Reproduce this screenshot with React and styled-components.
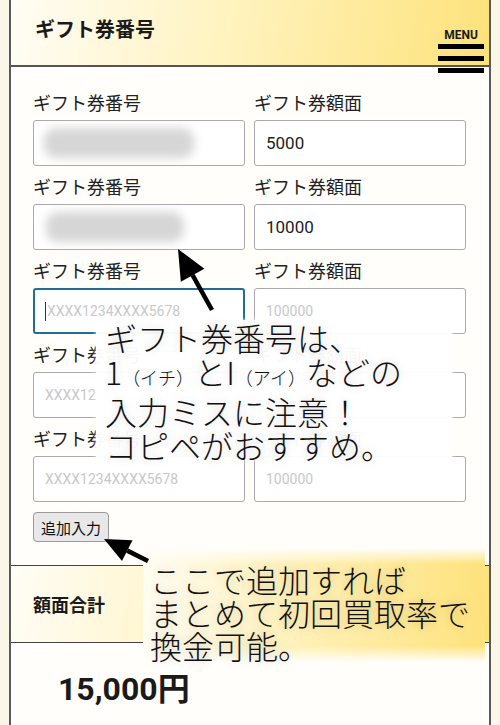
import React from "react";
import styled, { createGlobalStyle, css } from "styled-components";

const GlobalStyle = createGlobalStyle`
  body {
    margin: 0;
    background: #fbf7e8;
    font-family: Roboto, "Noto Sans CJK JP", sans-serif;
    color: #1a1a1a;
  }
`;

const Page = styled.div`
  position: relative;
  width: 500px;
  height: 725px;
  overflow: hidden;
`;

const Panel = styled.div`
  margin: 0 9px;
  height: 725px;
  background: #fffefa;
  border-left: 2px solid #5a5a5a;
  border-right: 2px solid #5a5a5a;
`;

const Header = styled.header`
  height: 67px;
  box-sizing: border-box;
  padding: 18px 5px 0 24px;
  display: flex;
  align-items: flex-start;
  border-bottom: 2px solid #555;
  background: linear-gradient(100deg, #fffdf6 0%, #fff3bf 45%, #fde27a 100%);
`;

const Title = styled.h1`
  margin: 0;
  font-size: 20px;
  line-height: 24px;
  font-weight: 700;
`;

const Menu = styled.div`
  margin-left: auto;
  margin-top: 10px;
  width: 46px;
  display: flex;
  flex-direction: column;
  align-items: center;
  position: relative;
  z-index: 1;

  span {
    font-size: 12px;
    line-height: 14px;
    font-weight: 700;
    margin-bottom: 2px;
  }
`;

const Bar = styled.i`
  display: block;
  width: 46px;
  height: 5px;
  background: #000;
  margin-bottom: 7px;
`;

const Form = styled.div`
  padding: 27px 0 0 22px;
  display: grid;
  grid-template-columns: 212px 212px;
  column-gap: 9px;
  row-gap: 12px;
`;

const Field = styled.div`
  display: flex;
  flex-direction: column;
`;

const Label = styled.label`
  font-size: 18px;
  line-height: 20px;
  margin-bottom: 6px;
  color: #222;
`;

const Box = styled.div`
  height: 46px;
  box-sizing: border-box;
  border: 1px solid #a9a9ad;
  border-radius: 3px;
  background: #fff;
  display: flex;
  align-items: center;
  padding-left: 11px;
  font-size: 17px;
  color: #222;

  ${(p) =>
    p.$focused &&
    css`
      border: 2px solid #1f6e96;
      padding-left: 10px;
    `}
`;

const Placeholder = styled.span`
  font-size: 14px;
  color: #c8c8c8;
`;

const Caret = styled.span`
  width: 1px;
  height: 19px;
  background: #333;
  margin-right: 1px;
`;

const Blur = styled.span`
  display: block;
  height: 30px;
  width: ${(p) => p.$w}px;
  margin-left: ${(p) => p.$x}px;
  background: #d6d6d6;
  border-radius: 12px;
  filter: blur(5px);
`;

const AddButton = styled.button`
  margin: 10px 0 23px 22px;
  height: 30px;
  padding: 0 7px;
  font-family: "Noto Sans CJK JP", sans-serif;
  font-size: 15px;
  color: #111;
  background: #e8e8e8;
  border: 1px solid #9a9a9a;
  border-radius: 4px;
`;

const Summary = styled.div`
  height: 78px;
  box-sizing: border-box;
  display: flex;
  align-items: center;
  padding-left: 22px;
  border-top: 1.5px solid #444;
  border-bottom: 1.5px solid #444;
  background: linear-gradient(100deg, #fffdf6 0%, #fff3c0 45%, #fde27a 100%);
  font-size: 18px;
  font-weight: 700;
`;

const Total = styled.div`
  padding: 26px 0 0 47px;
  font-size: 32px;
  line-height: 40px;
  font-weight: 700;
`;

const Callout = styled.div`
  position: absolute;
  z-index: 2;
  left: ${(p) => p.$x}px;
  top: ${(p) => p.$y}px;
  width: ${(p) => p.$w}px;
  height: ${(p) => p.$h}px;
  box-sizing: border-box;
  padding: ${(p) => p.$pad};
  font-family: "Noto Sans CJK JP", sans-serif;
  font-weight: 300;
  font-size: 32px;
  line-height: ${(p) => p.$lh}px;
  color: #111;
  white-space: nowrap;
  text-shadow: 0 0 10px rgba(0, 0, 0, 0.18);

  &::before {
    content: "";
    position: absolute;
    inset: 0;
    z-index: -1;
    ${(p) =>
      p.$yellow
        ? css`
            background: linear-gradient(90deg, #fffcf2 0%, #fff1b8 45%, #fde27c 100%);
            -webkit-mask-image: linear-gradient(180deg, transparent 0, #000 16px, #000 calc(100% - 16px), transparent 100%);
            mask-image: linear-gradient(180deg, transparent 0, #000 16px, #000 calc(100% - 16px), transparent 100%);
          `
        : css`
            background: rgba(255, 255, 255, 0.97);
            box-shadow: 0 0 4px rgba(255, 255, 255, 0.9);
          `}
  }
`;

const Small = styled.span`
  font-size: 18px;
`;

const Overlay = styled.svg`
  position: absolute;
  z-index: 3;
  left: 0;
  top: 0;
  pointer-events: none;
`;

function Arrow({ x1, y1, x2, y2, head = 24 }) {
  const a = Math.atan2(y2 - y1, x2 - x1);
  const bx = x2 - head * Math.cos(a);
  const by = y2 - head * Math.sin(a);
  const w = head * 0.45;
  const px = -Math.sin(a) * w;
  const py = Math.cos(a) * w;
  return (
    <g>
      <line x1={x1} y1={y1} x2={bx} y2={by} stroke="#000" strokeWidth="4.5" />
      <polygon points={`${x2},${y2} ${bx + px},${by + py} ${bx - px},${by - py}`} fill="#000" />
    </g>
  );
}

const rows = [
  { blur: [150, 0], amount: "5000" },
  { blur: [138, 2], amount: "10000" },
  { focused: true },
  {},
  {},
];

export default function App() {
  return (
    <Page>
      <GlobalStyle />
      <Panel>
        <Header>
          <Title>ギフト券番号</Title>
          <Menu>
            <span>MENU</span>
            <Bar />
            <Bar />
            <Bar />
          </Menu>
        </Header>

        <Form>
          {rows.map((r, i) => (
            <React.Fragment key={i}>
              <Field>
                <Label>ギフト券番号</Label>
                <Box $focused={r.focused}>
                  {r.blur ? (
                    <Blur $w={r.blur[0]} $x={r.blur[1] - 1} />
                  ) : (
                    <>
                      {r.focused && <Caret />}
                      <Placeholder>XXXX1234XXXX5678</Placeholder>
                    </>
                  )}
                </Box>
              </Field>
              <Field>
                <Label>ギフト券額面</Label>
                <Box>{r.amount ? r.amount : <Placeholder>100000</Placeholder>}</Box>
              </Field>
            </React.Fragment>
          ))}
        </Form>

        <AddButton>追加入力</AddButton>

        <Summary>額面合計</Summary>
        <Total>15,000円</Total>
      </Panel>

      <Callout $x={96} $y={320} $w={356} $h={140} $lh={34} $pad="0 0 0 9px">
        ギフト券番号は、
        <br />
        1<Small>（イチ）</Small>とI<Small>（アイ）</Small>などの
        <br />
        入力ミスに注意！
        <br />
        コピペがおすすめ。
      </Callout>

      <Callout $x={143} $y={548} $w={342} $h={114} $lh={33} $yellow $pad="15px 0 0 7px">
        ここで追加すれば
        <br />
        まとめて初回買取率で
        <br />
        換金可能。
      </Callout>

      <Overlay width="500" height="725" viewBox="0 0 500 725">
        <Arrow x1={212} y1={310} x2={178} y2={249} head={30} />
        <Arrow x1={148} y1={561} x2={104} y2={539} head={26} />
      </Overlay>
    </Page>
  );
}
